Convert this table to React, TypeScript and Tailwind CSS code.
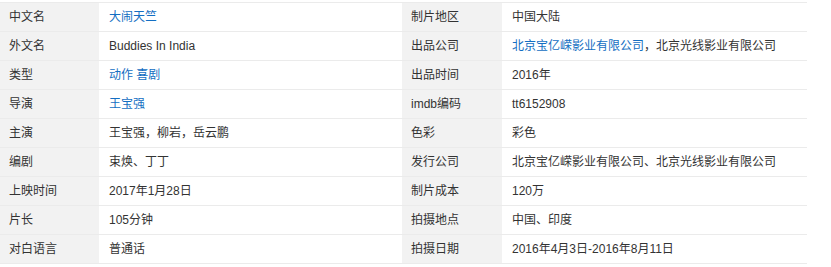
import React from 'react';

type Part = { text: string; link?: boolean };
type Row = { label: string; value: Part[] };

const LEFT: Row[] = [
  { label: '中文名', value: [{ text: '大闹天竺', link: true }] },
  { label: '外文名', value: [{ text: 'Buddies In India' }] },
  { label: '类型', value: [{ text: '动作', link: true }, { text: ' ' }, { text: '喜剧', link: true }] },
  { label: '导演', value: [{ text: '王宝强', link: true }] },
  { label: '主演', value: [{ text: '王宝强，柳岩，岳云鹏' }] },
  { label: '编剧', value: [{ text: '束焕、丁丁' }] },
  { label: '上映时间', value: [{ text: '2017年1月28日' }] },
  { label: '片长', value: [{ text: '105分钟' }] },
  { label: '对白语言', value: [{ text: '普通话' }] },
];

const RIGHT: Row[] = [
  { label: '制片地区', value: [{ text: '中国大陆' }] },
  { label: '出品公司', value: [{ text: '北京宝亿嵘影业有限公司', link: true }, { text: '，北京光线影业有限公司' }] },
  { label: '出品时间', value: [{ text: '2016年' }] },
  { label: 'imdb编码', value: [{ text: 'tt6152908' }] },
  { label: '色彩', value: [{ text: '彩色' }] },
  { label: '发行公司', value: [{ text: '北京宝亿嵘影业有限公司、北京光线影业有限公司' }] },
  { label: '制片成本', value: [{ text: '120万' }] },
  { label: '拍摄地点', value: [{ text: '中国、印度' }] },
  { label: '拍摄日期', value: [{ text: '2016年4月3日-2016年8月11日' }] },
];

function InfoTable({ rows, labelW, valueW }: { rows: Row[]; labelW: string; valueW: string }) {
  return (
    <div className="flex flex-col border-t border-[#ebebeb]">
      {rows.map((r) => (
        <div key={r.label} className="flex h-[29px] border-b border-[#ebebeb]">
          <div className={`${labelW} bg-[#f2f2f2] pl-[9px] flex items-center text-[#333]`}>{r.label}</div>
          <div className={`${valueW} pl-[10px] flex items-center text-[#333] whitespace-pre`}>
            <span>
              {r.value.map((p, i) =>
                p.link ? (
                  <span key={i} className="text-[#136ec2]">{p.text}</span>
                ) : (
                  <span key={i}>{p.text}</span>
                )
              )}
            </span>
          </div>
        </div>
      ))}
    </div>
  );
}

export default function App() {
  return (
    <div
      className="w-[831px] h-[267px] bg-white pt-[2px] text-[12px] overflow-hidden"
      style={{ fontFamily: '"Liberation Sans", Arial, "Noto Sans CJK SC", sans-serif' }}
    >
      <div className="flex">
        <InfoTable rows={LEFT} labelW="w-[99px]" valueW="w-[303px]" />
        <InfoTable rows={RIGHT} labelW="w-[100px]" valueW="w-[305px]" />
      </div>
    </div>
  );
}
